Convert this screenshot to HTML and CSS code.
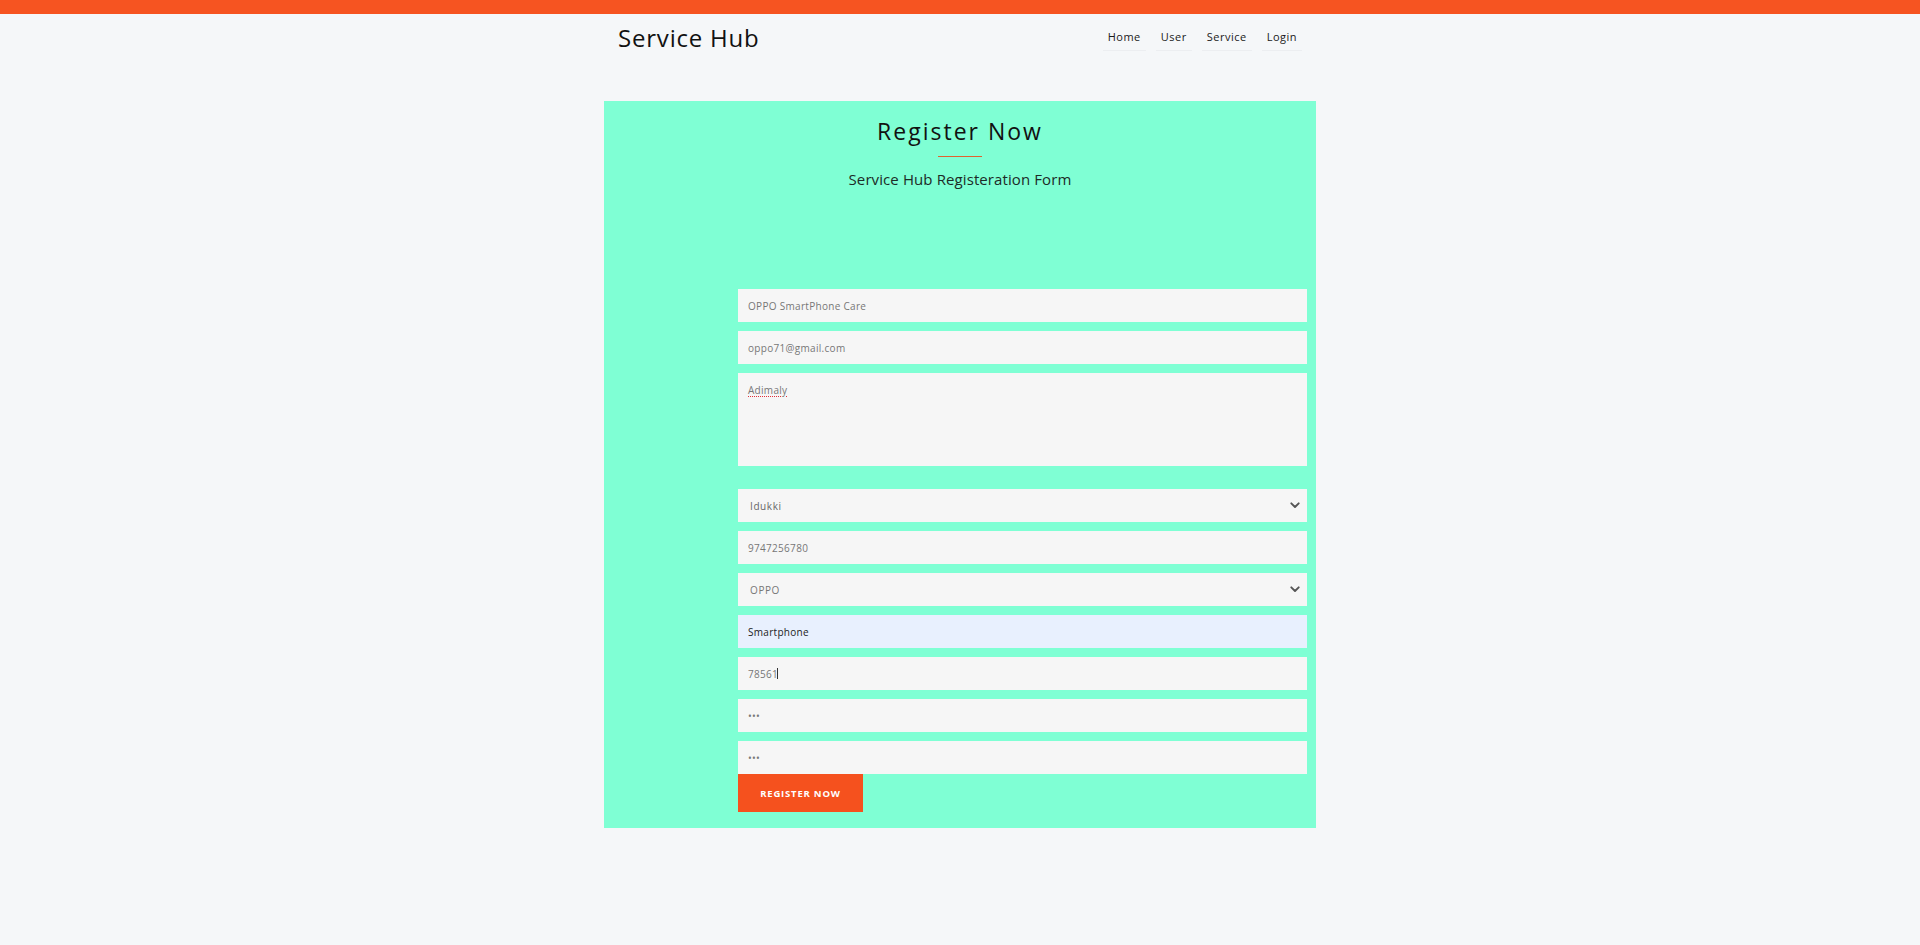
FILE: index.html
```html
<!DOCTYPE html>
<html lang="en">
<head>
<meta charset="utf-8">
<title>Service Hub - Register</title>
<link rel="stylesheet" href="styles.css">
</head>
<body>
<div class="topbar"></div>
<header class="header">
  <div class="brand">Service Hub</div>
  <nav class="nav">
    <a href="#" class="nav-link">Home</a>
    <a href="#" class="nav-link">User</a>
    <a href="#" class="nav-link">Service</a>
    <a href="#" class="nav-link">Login</a>
  </nav>
</header>
<main class="card">
  <h1 class="title">Register Now</h1>
  <div class="rule"></div>
  <p class="subtitle">Service Hub Registeration Form</p>
  <form class="form">
    <input class="field" type="text" value="OPPO SmartPhone Care">
    <input class="field" type="email" value="oppo71@gmail.com">
    <textarea class="field area" spellcheck="false">Adimaly</textarea>
    <div class="select-wrap">
      <select class="field select dark">
        <option>Idukki</option>
      </select>
      <svg class="chev" width="10" height="7" viewBox="0 0 10 7"><path d="M1.3 1.3 L5 5 L8.7 1.3" fill="none" stroke="#555" stroke-width="1.9" stroke-linecap="round" stroke-linejoin="round"/></svg>
    </div>
    <input class="field" type="text" value="9747256780">
    <div class="select-wrap">
      <select class="field select">
        <option>OPPO</option>
      </select>
      <svg class="chev" width="10" height="7" viewBox="0 0 10 7"><path d="M1.3 1.3 L5 5 L8.7 1.3" fill="none" stroke="#555" stroke-width="1.9" stroke-linecap="round" stroke-linejoin="round"/></svg>
    </div>
    <input class="field autofill" type="text" value="Smartphone">
    <div class="caret-wrap">
      <input class="field" type="text" value="78561">
      <span class="caret"></span>
    </div>
    <input class="field" type="password" value="abc">
    <input class="field last" type="password" value="abc">
    <button class="btn" type="button">REGISTER NOW</button>
  </form>
</main>
</body>
</html>
```
FILE: styles.css
```css
* { box-sizing: border-box; }
html, body { margin: 0; padding: 0; }
body {
  background: #f5f7f9;
  font-family: "Open Sans", "Liberation Sans", sans-serif;
  color: #111;
  min-height: 945px;
}
.topbar {
  height: 14px;
  background: #f65421;
}
.header {
  width: 690px;
  height: 87px;
  margin: 0 auto;
  padding: 10px 3px 0 0;
  display: flex;
  justify-content: space-between;
  align-items: flex-start;
}
.brand {
  font-size: 24px;
  line-height: 28px;
  letter-spacing: 0.8px;
  color: #111;
  margin-left: 3px;
}
.nav {
  display: flex;
  gap: 10px;
  margin-top: 5px;
}
.nav-link {
  display: block;
  font-size: 11px;
  font-weight: 500;
  line-height: 16px;
  letter-spacing: 0.5px;
  color: #1a1a1a;
  text-decoration: none;
  padding: 0 5px 5px;
  border-bottom: 1px solid #eceef1;
}
.card {
  width: 712px;
  margin: 0 auto;
  background: #7fffd4;
  padding: 15px 9px 16px 134px;
}
.title {
  margin: 0 -9px 0 -134px;
  text-align: center;
  font-size: 23px;
  font-weight: 400;
  line-height: 30px;
  letter-spacing: 2px;
  color: #111;
}
.rule {
  width: 44px;
  height: 1px;
  background: #e0622f;
  margin: 10px 0 0 calc(356px - 134px - 22px);
}
.subtitle {
  margin: 12px -9px 0 -134px;
  text-align: center;
  font-size: 15px;
  line-height: 20px;
  letter-spacing: 0.1px;
  color: #1d2b27;
}
.form {
  margin-top: 100px;
}
.field {
  display: block;
  width: 100%;
  height: 33px;
  margin: 0 0 9px;
  padding: 0 10px;
  border: none;
  outline: none;
  background: #f6f6f6;
  font-family: "Open Sans", "Liberation Sans", sans-serif;
  font-size: 10px;
  letter-spacing: 0.3px;
  color: #777;
  border-radius: 0;
}
.area {
  height: 93px;
  padding: 11px 10px 10px;
  margin-bottom: 23px;
  resize: none;
  line-height: 1.36;
  text-decoration: underline dotted #e0303a;
  text-underline-offset: 2px;
  text-decoration-thickness: 1px;
}
.select-wrap {
  position: relative;
  margin-bottom: 9px;
}
.select {
  -webkit-appearance: none;
  appearance: none;
  padding-left: 12px;
  margin: 0;
  letter-spacing: 0.6px;
}
.select.dark { color: #666; }
.chev {
  position: absolute;
  right: 7px;
  top: 13px;
  pointer-events: none;
}
.autofill {
  background: #e8f0fe;
  color: #222;
}
.caret-wrap {
  position: relative;
}
.caret {
  position: absolute;
  left: 39px;
  top: 11px;
  width: 1px;
  height: 11px;
  background: #333;
}
.last { margin-bottom: 0; }
.btn {
  display: block;
  width: 125px;
  height: 38px;
  border: none;
  background: #f5511e;
  color: #fff;
  font-family: "Open Sans", "Liberation Sans", sans-serif;
  font-size: 9.5px;
  font-weight: 700;
  letter-spacing: 0.8px;
  padding: 0;
  cursor: pointer;
}
```
